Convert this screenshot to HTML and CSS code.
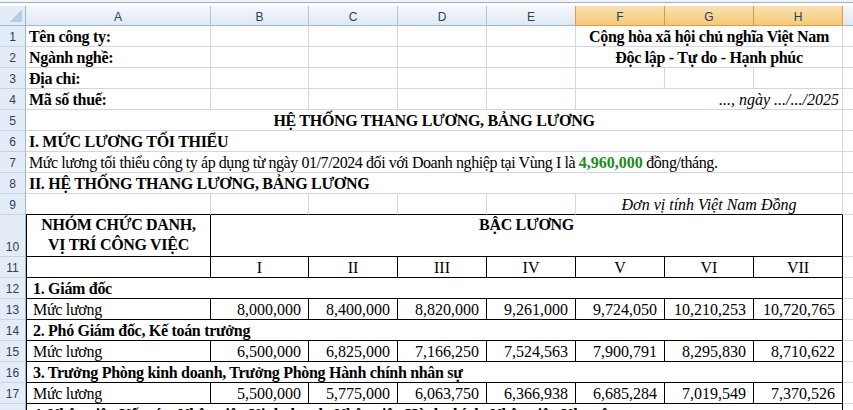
FILE: index.html
```html
<!DOCTYPE html>
<html lang="vi">
<head>
<meta charset="utf-8">
<title>Hệ thống thang lương, bảng lương</title>
<link rel="stylesheet" href="styles.css">
</head>
<body>
<div class="sheet">
  <div class="strip"></div>

  <div class="corner"></div>
  <div class="ch">A</div><div class="ch">B</div><div class="ch">C</div><div class="ch">D</div><div class="ch pre">E</div>
  <div class="ch sel">F</div><div class="ch sel">G</div><div class="ch sel">H</div><div class="ch"></div>

  <div class="rh">1</div>
  <div class="c b">Tên công ty:</div><div class="c"></div><div class="c"></div><div class="c"></div><div class="c"></div>
  <div class="c s3 b ctr">Cộng hòa xã hội chủ nghĩa Việt Nam</div><div class="c"></div>

  <div class="rh">2</div>
  <div class="c b">Ngành nghề:</div><div class="c"></div><div class="c"></div><div class="c"></div><div class="c"></div>
  <div class="c s3 b ctr">Độc lập - Tự do - Hạnh phúc</div><div class="c"></div>

  <div class="rh">3</div>
  <div class="c b">Địa chỉ:</div><div class="c"></div><div class="c"></div><div class="c"></div><div class="c"></div>
  <div class="c"></div><div class="c"></div><div class="c"></div><div class="c"></div>

  <div class="rh">4</div>
  <div class="c b">Mã số thuế:</div><div class="c"></div><div class="c"></div><div class="c"></div><div class="c"></div>
  <div class="c s3 i r">..., ngày .../.../2025</div><div class="c"></div>

  <div class="rh">5</div>
  <div class="c s8 b ctr">HỆ THỐNG THANG LƯƠNG, BẢNG LƯƠNG</div><div class="c"></div>

  <div class="rh">6</div>
  <div class="c s8 b">I. MỨC LƯƠNG TỐI THIỂU</div><div class="c"></div>

  <div class="rh">7</div>
  <div class="c s8 tight">Mức lương tối thiểu công ty áp dụng từ ngày 01/7/2024 đối với Doanh nghiệp tại Vùng I là&nbsp;<span class="g">4,960,000</span>&nbsp;đồng/tháng.</div><div class="c"></div>

  <div class="rh">8</div>
  <div class="c s8 b">II. HỆ THỐNG THANG LƯƠNG, BẢNG LƯƠNG</div><div class="c"></div>

  <div class="rh">9</div>
  <div class="c bb"></div><div class="c bb"></div><div class="c bb"></div><div class="c bb"></div><div class="c bb"></div>
  <div class="c s3 bb i ctr">Đơn vị tính Việt Nam Đồng</div><div class="c"></div>

  <div class="rh">10</div>
  <div class="c bl bb br b ctr wrap">NHÓM CHỨC DANH,<br>VỊ TRÍ CÔNG VIỆC</div>
  <div class="c s7 bb br b ctr top">BẬC LƯƠNG</div><div class="c"></div>

  <div class="rh">11</div>
  <div class="c bl bb br"></div>
  <div class="c bb br ctr num0">I</div><div class="c bb br ctr num0">II</div><div class="c bb br ctr num0">III</div><div class="c bb br ctr num0">IV</div>
  <div class="c bb br ctr num0">V</div><div class="c bb br ctr num0">VI</div><div class="c bb br ctr num0">VII</div><div class="c"></div>

  <div class="rh">12</div>
  <div class="c s8 bl bb br b in">1. Giám đốc</div><div class="c"></div>

  <div class="rh">13</div>
  <div class="c bl bb br in">Mức lương</div>
  <div class="c bb br r num">8,000,000</div><div class="c bb br r num">8,400,000</div><div class="c bb br r num">8,820,000</div><div class="c bb br r num">9,261,000</div>
  <div class="c bb br r num">9,724,050</div><div class="c bb br r num">10,210,253</div><div class="c bb br r num">10,720,765</div><div class="c"></div>

  <div class="rh">14</div>
  <div class="c s8 bl bb br b in">2. Phó Giám đốc, Kế toán trưởng</div><div class="c"></div>

  <div class="rh">15</div>
  <div class="c bl bb br in">Mức lương</div>
  <div class="c bb br r num">6,500,000</div><div class="c bb br r num">6,825,000</div><div class="c bb br r num">7,166,250</div><div class="c bb br r num">7,524,563</div>
  <div class="c bb br r num">7,900,791</div><div class="c bb br r num">8,295,830</div><div class="c bb br r num">8,710,622</div><div class="c"></div>

  <div class="rh">16</div>
  <div class="c s8 bl bb br b in">3. Trưởng Phòng kinh doanh, Trưởng Phòng Hành chính nhân sự</div><div class="c"></div>

  <div class="rh">17</div>
  <div class="c bl bb br in">Mức lương</div>
  <div class="c bb br r num">5,500,000</div><div class="c bb br r num">5,775,000</div><div class="c bb br r num">6,063,750</div><div class="c bb br r num">6,366,938</div>
  <div class="c bb br r num">6,685,284</div><div class="c bb br r num">7,019,549</div><div class="c bb br r num">7,370,526</div><div class="c"></div>

  <div class="rh">18</div>
  <div class="c s8 bl bb br b in">4. Nhân viên Kế toán, Nhân viên Kinh doanh, Nhân viên Hành chính, Nhân viên Kho vận</div><div class="c"></div>
</div>
</body>
</html>
```

FILE: styles.css
```css
html, body {
  margin: 0;
  padding: 0;
  background: #ffffff;
  overflow: hidden;
}

body {
  width: 853px;
  height: 410px;
}

.sheet {
  display: grid;
  grid-template-columns: 26px 185px 98px 89px 89px 89px 89px 89px 89px 89px;
  grid-template-rows: 6px 20px repeat(9, 21px) 42px repeat(8, 21px);
  width: max-content;
}

.strip {
  grid-column: 1 / -1;
  background: linear-gradient(#f1f3f6 0 2px, #9fb1c8 2px 3px, #ffffff 3px);
}

.corner {
  box-sizing: border-box;
  border-right: 1px solid #9eb6ce;
  border-bottom: 1px solid #9eb6ce;
  background:
    linear-gradient(to bottom right, transparent 50%, #b7cbe4 50%) no-repeat right 3px bottom 3px / 12px 12px,
    #e4ecf7;
}

.ch {
  box-sizing: border-box;
  display: flex;
  align-items: center;
  justify-content: center;
  padding-top: 2px;
  border-right: 1px solid #b1c4da;
  border-bottom: 1px solid #9eb6ce;
  background: linear-gradient(#f5f8fc, #e0e8f3);
  color: #27415f;
  font: 12px "Liberation Sans", Arial, sans-serif;
}

.ch.pre {
  border-right-color: #f29536;
}

.ch.sel {
  background: linear-gradient(#fae0b0, #f4c97a);
  border-right-color: #f29536;
  border-bottom-color: #f29536;
}

.rh {
  box-sizing: border-box;
  display: flex;
  align-items: flex-end;
  justify-content: center;
  padding-bottom: 2px;
  border-right: 1px solid #9eb6ce;
  border-bottom: 1px solid #c5d3e5;
  background: #e4ecf7;
  color: #27415f;
  font: 12px "Liberation Sans", Arial, sans-serif;
}

.c {
  box-sizing: border-box;
  min-width: 0;
  display: flex;
  align-items: flex-end;
  padding: 0 3px;
  border-right: 1px solid #d0d7e5;
  border-bottom: 1px solid #d0d7e5;
  white-space: nowrap;
  overflow: hidden;
  color: #000000;
  font: 16px "Liberation Serif", "Times New Roman", serif;
  letter-spacing: -0.3px;
}

.s3 { grid-column: span 3; }
.s7 { grid-column: span 7; }
.s8 { grid-column: span 8; }

.b { font-weight: bold; }
.i { font-style: italic; letter-spacing: 0; }
.ctr { justify-content: center; }
.r { justify-content: flex-end; }
.top { align-items: flex-start; padding-top: 1px; }
.in { padding-left: 6px; }
.num { padding-right: 7px; letter-spacing: 0; }
.num0 { letter-spacing: 0; }

.tight {
  letter-spacing: -0.43px;
}

.wrap {
  white-space: normal;
  text-align: center;
  line-height: 20px;
  padding-bottom: 1px;
}

.bl { border-left: 1px solid #000000; }
.bb { border-bottom-color: #000000; }
.br { border-right-color: #000000; }

.g {
  color: #1e8c1e;
  font-weight: bold;
  letter-spacing: 0;
}
```
